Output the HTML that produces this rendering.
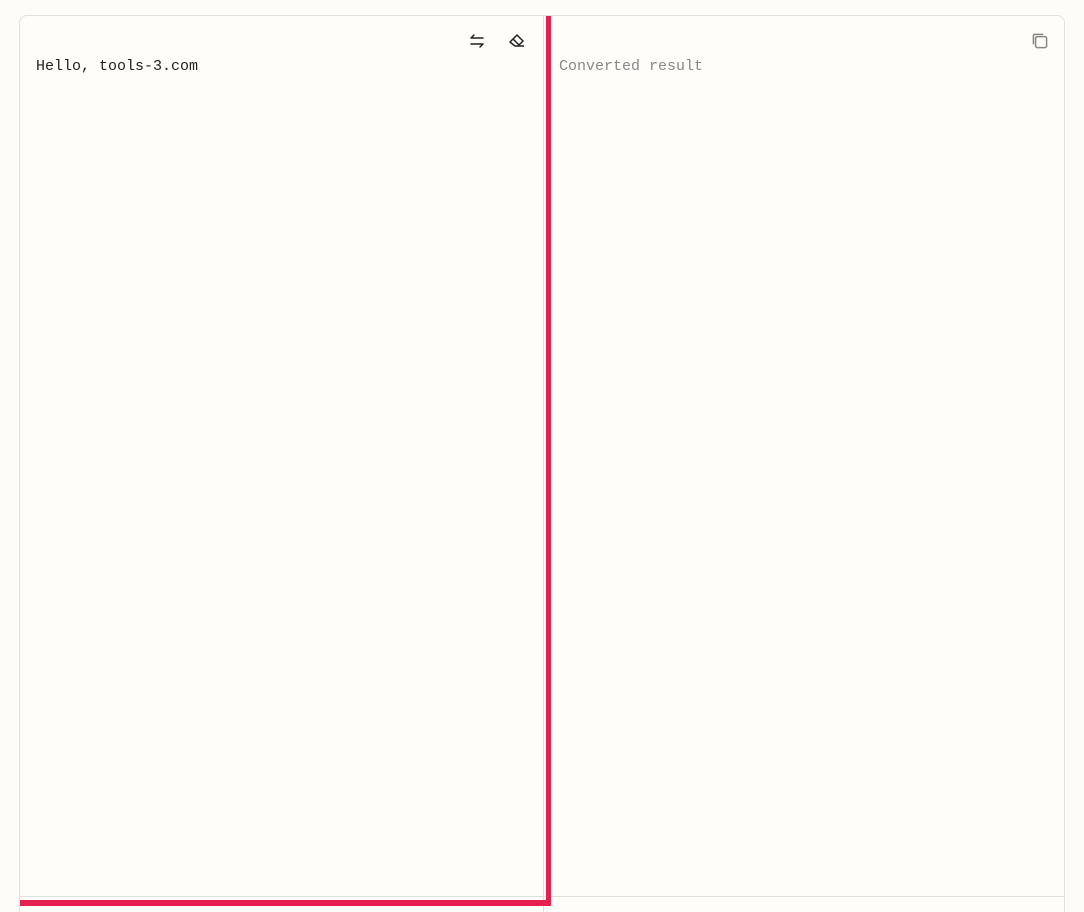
<!DOCTYPE html>
<html><head><style>
html,body{margin:0;padding:0;background:#fdfcf8;width:1084px;height:912px;overflow:hidden;position:relative}
.card{position:absolute;left:19px;top:15px;width:1044px;height:920px;border:1px solid #e2e0d8;border-radius:8px;background:#fefdf9}
.div{position:absolute;left:543px;top:16px;width:1px;height:896px;background:#e2e0d8}
.hl{position:absolute;left:20px;top:896px;width:1044px;height:1px;background:#e2e0d8}
.t{position:absolute;font-family:"Liberation Mono",monospace;font-size:15px;line-height:18px}
.rv{position:absolute;left:546px;top:16px;width:5px;height:890px;background:#e3204e}
.rh{position:absolute;left:20px;top:900px;width:531px;height:6px;background:#e3204e}
</style></head><body>
<div class="card"></div>
<div class="div"></div>
<div class="hl"></div>
<div class="t" style="left:36px;top:58px;color:#222">Hello, tools-3.com</div>
<div class="t" style="left:559px;top:58px;color:#888">Converted result</div>
<svg style="position:absolute;left:467px;top:31px" width="20" height="20" viewBox="0 0 20 20" fill="none" stroke="#222" stroke-width="1.5" stroke-linecap="round" stroke-linejoin="round"><path d="M4 7h12M4 7l3-3M16 13H4M16 13l-3 3"/></svg>
<svg style="position:absolute;left:507px;top:31px" width="20" height="20" viewBox="0 0 20 20" fill="none" stroke="#222" stroke-width="1.5" stroke-linejoin="round"><path d="M3 11l7-7 6 6-5 5H8z M6 8l6 6 M8 15h9"/></svg>
<svg style="position:absolute;left:1029px;top:30px" width="22" height="22" viewBox="0 0 20 20" fill="none" stroke="#888" stroke-width="1.4"><rect x="6" y="6" width="10" height="10" rx="1.5"/><path d="M4 13V5a1 1 0 0 1 1-1h8"/></svg>
<div class="rv"></div>
<div class="rh"></div>
</body></html>
